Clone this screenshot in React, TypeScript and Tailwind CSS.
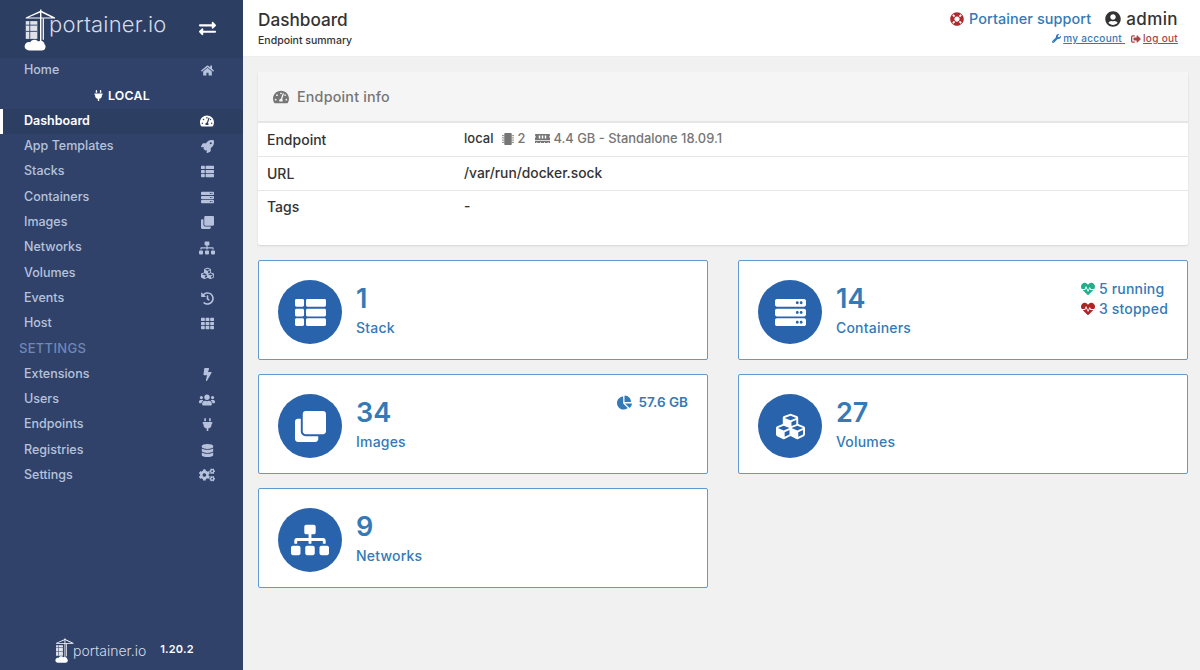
import * as React from 'react';
import {
  FaBolt, FaChartPie, FaClone, FaCogs, FaCubes, FaDatabase, FaExchangeAlt, FaHeartbeat, FaHistory, FaHome,
  FaLifeRing, FaMemory, FaMicrochip, FaPlug, FaRocket, FaServer, FaSignOutAlt, FaSitemap, FaTachometerAlt,
  FaTh, FaThList, FaUserCircle, FaUsers, FaWrench,
} from 'react-icons/fa';

function Logo({ className }: { className: string }) {
  return (
    <svg viewBox="0 0 36 46" className={className} fill="#fff">
      <path d="M2 9 L19 1 L35 9 L35 10 L2 10 Z M5 9 L19 3 L31 9 Z" fillRule="evenodd" />
      <rect x="18" y="0" width="1.6" height="36" />
      <rect x="21" y="10" width="1.4" height="24" />
      <rect x="2" y="13" width="13" height="20" opacity="0.85" />
      <rect x="2" y="17" width="13" height="1" fill="#30426a" />
      <rect x="2" y="24" width="13" height="1" fill="#30426a" />
      <rect x="6" y="13" width="1" height="20" fill="#30426a" />
      <path d="M6 46 C2 46 0 43 1 40 C2 37 5 36 7 37 C8 33 14 33 16 36 C19 34 23 36 23 39 C25 40 25 46 20 46 Z" />
    </svg>
  );
}

const items1 = [
  { label: 'App Templates', icon: <FaRocket /> },
  { label: 'Stacks', icon: <FaThList /> },
  { label: 'Containers', icon: <FaServer /> },
  { label: 'Images', icon: <FaClone /> },
  { label: 'Networks', icon: <FaSitemap className="text-[16px]" /> },
  { label: 'Volumes', icon: <FaCubes /> },
  { label: 'Events', icon: <FaHistory /> },
  { label: 'Host', icon: <FaTh /> },
];

const items2 = [
  { label: 'Extensions', icon: <FaBolt /> },
  { label: 'Users', icon: <FaUsers className="text-[16px]" /> },
  { label: 'Endpoints', icon: <FaPlug /> },
  { label: 'Registries', icon: <FaDatabase /> },
  { label: 'Settings', icon: <FaCogs className="text-[16px]" /> },
];

function NavRow({ label, icon }: { label: string; icon: React.ReactNode }) {
  return (
    <div className="flex h-[25.3px] items-center justify-between pl-[24px] pr-[28px] text-[12.5px] font-medium text-[#b6c2dc]">
      <span>{label}</span>
      <span className="flex w-[16px] justify-center text-[13px]">{icon}</span>
    </div>
  );
}

function Sidebar() {
  return (
    <aside className="flex h-full w-[243px] shrink-0 flex-col bg-[#30426a]">
      <div className="flex h-[58px] shrink-0 items-center justify-between bg-[#2d3e63] pl-[24px] pr-[27px]">
        <div className="flex items-start">
          <Logo className="mt-[1px] h-[44px] w-[32px]" />
          <span className="-ml-[7px] mt-[1px] text-[22px] font-light tracking-[0.2px] text-[#d5dbe8]">portainer.io</span>
        </div>
        <FaExchangeAlt className="-mt-[2px] text-[17px] text-white" />
      </div>
      <NavRow label="Home" icon={<FaHome />} />
      <div className="flex h-[25.3px] items-center justify-center gap-[4px] text-[12.3px] font-semibold tracking-[0.3px] text-white">
        <FaPlug className="text-[11px]" />
        LOCAL
      </div>
      <div className="flex h-[25.3px] items-center justify-between border-l-[3px] border-white bg-[#2d3e63] pl-[21px] pr-[28px] text-[12.5px] font-semibold text-white">
        <span>Dashboard</span>
        <span className="flex w-[16px] justify-center text-[14px]"><FaTachometerAlt /></span>
      </div>
      {items1.map((item) => (
        <NavRow key={item.label} label={item.label} icon={item.icon} />
      ))}
      <div className="flex h-[25.3px] items-center pl-[19px] text-[13px] font-medium tracking-[0.3px] text-[#6f88b8]">SETTINGS</div>
      {items2.map((item) => (
        <NavRow key={item.label} label={item.label} icon={item.icon} />
      ))}
      <div className="mt-auto flex h-[33px] items-start pl-[55px]">
        <Logo className="h-[27px] w-[19px]" />
        <span className="-ml-[1px] mt-[3px] text-[14px] font-light text-[#d5dbe8]">portainer.io</span>
        <span className="ml-[14px] mt-[4px] text-[11px] font-semibold tracking-[0.2px] text-white">1.20.2</span>
      </div>
    </aside>
  );
}

function Header() {
  return (
    <header className="flex h-[57px] shrink-0 justify-between border-b border-[#eeeeee] bg-white pl-[15px] pr-[22px]">
      <div className="pt-[9px]">
        <div className="text-[17.2px] font-medium leading-[22px] text-[#333333]">Dashboard</div>
        <div className="mt-[2px] text-[10.5px] font-medium text-[#333333]">Endpoint summary</div>
      </div>
      <div className="flex flex-col items-end pt-[9px]">
        <div className="flex items-center text-[14.4px] leading-[20px]">
          <FaLifeRing className="mr-[5px] text-[14px] text-[#ae2a2f]" />
          <span className="font-medium tracking-[0.1px] text-[#337ab7]">Portainer support</span>
          <FaUserCircle className="ml-[14px] mr-[5px] text-[16px] text-[#333333]" />
          <span className="text-[17px] font-medium tracking-[0.4px] text-[#333333]">admin</span>
        </div>
        <div className="mt-[2px] flex items-center text-[10px] font-medium tracking-[0.3px]">
          <FaWrench className="mr-[2px] text-[9px] text-[#337ab7]" />
          <span className="text-[#337ab7] underline">my account&nbsp;</span>
          <FaSignOutAlt className="ml-[6px] mr-[2px] text-[10px] text-[#a94442]" />
          <span className="text-[#a94442] underline">log out</span>
        </div>
      </div>
    </header>
  );
}

function InfoRow({ name, last, children }: { name: string; last?: boolean; children: React.ReactNode }) {
  return (
    <div className={last ? 'flex h-[31px] items-center px-[9px] text-[13.8px] font-medium text-[#333333]' : 'flex h-[34px] items-center border-b border-[#e6e6e6] px-[9px] pb-[1px] text-[13.8px] font-medium text-[#333333]'}>
      <div className="w-[197px] text-[14px]">{name}</div>
      <div className="flex items-center">{children}</div>
    </div>
  );
}

function EndpointInfo() {
  return (
    <section className="h-[173px] rounded-[2px] bg-white shadow-[0_1px_2px_rgba(0,0,0,0.12)]">
      <div className="flex h-[51px] items-center gap-[8px] border-b-2 border-[#e6e6e6] bg-[#f5f5f5] pl-[15px] text-[14.3px] font-medium tracking-[0.2px] text-[#767676]">
        <FaTachometerAlt className="text-[16px]" />
        Endpoint info
      </div>
      <InfoRow name="Endpoint">
        <span className="text-[13px]">local</span>
        <span className="ml-[9px] flex items-center gap-[3px] text-[12.9px] text-[#767676]">
          <FaMicrochip className="text-[12px]" /> 2
          <FaMemory className="ml-[7px] text-[15px]" /> 4.4 GB - Standalone 18.09.1
        </span>
      </InfoRow>
      <InfoRow name="URL">/var/run/docker.sock</InfoRow>
      <InfoRow name="Tags" last>-</InfoRow>
    </section>
  );
}

function Card({ value, label, icon, children }: { value: string; label: string; icon: React.ReactNode; children?: React.ReactNode }) {
  return (
    <div className="flex h-[100px] items-center justify-between rounded-[2px] border border-[#5f9bd0] bg-white pl-[19px] pr-[19px]">
      <div className="flex items-center">
        <div className="mt-[4px] flex h-[64px] w-[64px] items-center justify-center rounded-full bg-[#2863ab] text-[31px] text-white">{icon}</div>
        <div className="ml-[14px] text-[#337ab7]">
          <div className="text-[27px] font-semibold leading-[34px]">{value}</div>
          <div className="mt-[2px] text-[14px] font-medium leading-[20px] tracking-[0.2px]">{label}</div>
        </div>
      </div>
      {children}
    </div>
  );
}

export default function App() {
  return (
    <div className="flex h-[670px] w-[1200px] overflow-hidden bg-[#f1f1f1] font-['Inter',sans-serif]">
      <Sidebar />
      <main className="flex flex-1 flex-col">
        <Header />
        <div className="flex flex-col gap-[15px] pl-[15px] pr-[12px] pt-[15px]">
          <EndpointInfo />
          <div className="grid grid-cols-2 gap-x-[30px] gap-y-[14px]">
            <Card value="1" label="Stack" icon={<FaThList />} />
            <Card value="14" label="Containers" icon={<FaServer />}>
              <div className="mb-[22px] flex flex-col text-[14px] font-medium leading-[20px] tracking-[0.2px] text-[#337ab7]">
                <div className="flex items-center gap-[4px]"><FaHeartbeat className="text-[14px] text-[#23ae89]" />5 running</div>
                <div className="flex items-center gap-[4px]"><FaHeartbeat className="text-[14px] text-[#ae2323]" />3 stopped</div>
              </div>
            </Card>
            <Card value="34" label="Images" icon={<FaClone />}>
              <div className="mb-[44px] flex items-center gap-[6px] text-[13.5px] font-semibold text-[#337ab7]">
                <FaChartPie className="text-[15px]" />57.6 GB
              </div>
            </Card>
            <Card value="27" label="Volumes" icon={<FaCubes className="text-[29px]" />} />
            <Card value="9" label="Networks" icon={<FaSitemap className="text-[38px]" />} />
          </div>
        </div>
      </main>
    </div>
  );
}
